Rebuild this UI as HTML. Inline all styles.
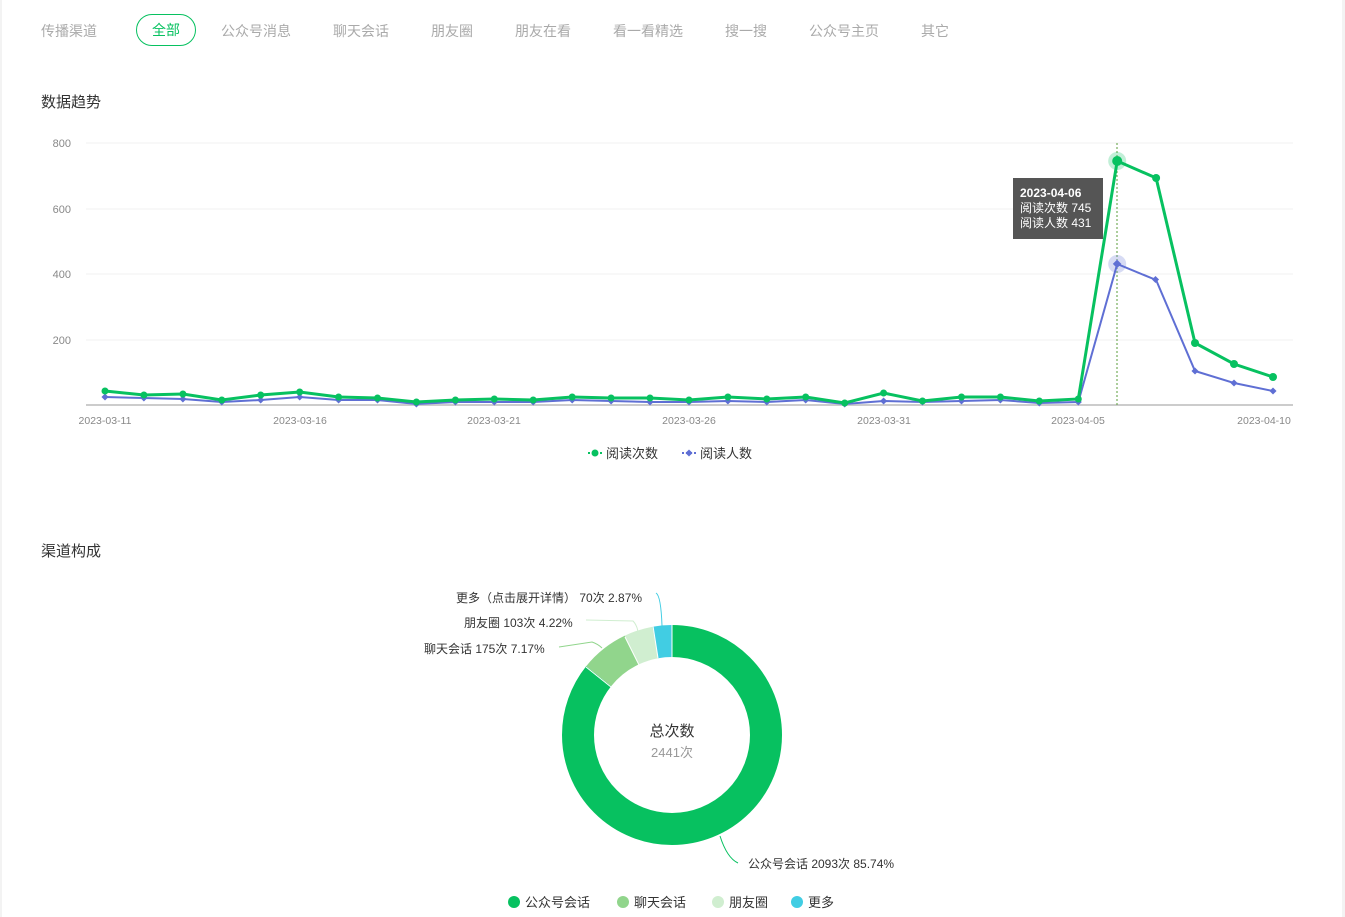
<!DOCTYPE html>
<html><head><meta charset="utf-8">
<style>
body{margin:0;width:1345px;height:917px;background:#fff;font-family:"Liberation Sans","Noto Sans CJK SC",sans-serif;position:relative;overflow:hidden}
.l{position:absolute;left:0;top:0;width:2px;height:917px;background:#f3f3f3}
.r{position:absolute;left:1342px;top:0;width:3px;height:917px;background:#f3f3f3}
.tab{position:absolute;top:21px;font-size:14px;color:#aaa;white-space:nowrap}
.act{position:absolute;left:136px;top:14px;width:58px;height:30px;border:1px solid #07c160;border-radius:16px;color:#07c160;font-size:14px;text-align:center;line-height:30px}
.h{position:absolute;left:41px;font-size:15px;color:#333}
svg{position:absolute;left:0;top:0}
</style></head><body>
<div class="l"></div><div class="r"></div>
<div class="tab" style="left:41px">传播渠道</div>
<div class="act">全部</div>
<div class="tab" style="left:221px">公众号消息</div>
<div class="tab" style="left:333px">聊天会话</div>
<div class="tab" style="left:431px">朋友圈</div>
<div class="tab" style="left:515px">朋友在看</div>
<div class="tab" style="left:613px">看一看精选</div>
<div class="tab" style="left:725px">搜一搜</div>
<div class="tab" style="left:809px">公众号主页</div>
<div class="tab" style="left:921px">其它</div>
<div class="h" style="top:91px">数据趋势</div>
<div class="h" style="top:540px">渠道构成</div>
<svg width="1345" height="917" font-family="Liberation Sans, Noto Sans CJK SC, sans-serif">
<defs><rect id="d" x="-2.5" y="-2.5" width="5" height="5" transform="rotate(45)" fill="#5f6fd4"/></defs>
<g stroke="#f0f0f0" stroke-width="1">
<line x1="86" y1="143" x2="1293" y2="143"/><line x1="86" y1="209" x2="1293" y2="209"/><line x1="86" y1="274" x2="1293" y2="274"/><line x1="86" y1="340" x2="1293" y2="340"/>
</g>
<line x1="86" y1="405" x2="1293" y2="405" stroke="#ccc" stroke-width="2"/>
<g font-size="11" fill="#888" text-anchor="end">
<text x="71" y="147">800</text><text x="71" y="213">600</text><text x="71" y="278">400</text><text x="71" y="344">200</text>
</g>
<g font-size="10.5" fill="#888" text-anchor="middle">
<text x="105" y="424">2023-03-11</text><text x="300" y="424">2023-03-16</text><text x="494" y="424">2023-03-21</text><text x="689" y="424">2023-03-26</text><text x="884" y="424">2023-03-31</text><text x="1078" y="424">2023-04-05</text><text x="1264" y="424">2023-04-10</text>
</g>
<line x1="1117" y1="143" x2="1117" y2="405" stroke="#5a9e3a" stroke-width="1" stroke-dasharray="2,2"/>
<polyline fill="none" stroke="#5f6fd4" stroke-width="2" points="105,397 143.9,398 182.9,399 221.8,402 260.7,400 299.7,397 338.6,400 377.5,400 416.4,404 455.4,402 494.3,402 533.2,402 572.2,400 611.1,401 650,402 689,402 727.9,401 766.8,402 805.7,400 844.7,404 883.6,401 922.5,402 961.5,401 1000.4,400 1039.3,403 1078.3,402 1117.2,264 1156.1,280 1195,371 1234,383 1273,391"/>
<g>
<use href="#d" x="105" y="397"/><use href="#d" x="143.9" y="398"/><use href="#d" x="182.9" y="399"/><use href="#d" x="221.8" y="402"/><use href="#d" x="260.7" y="400"/><use href="#d" x="299.7" y="397"/><use href="#d" x="338.6" y="400"/><use href="#d" x="377.5" y="400"/><use href="#d" x="416.4" y="404"/><use href="#d" x="455.4" y="402"/><use href="#d" x="494.3" y="402"/><use href="#d" x="533.2" y="402"/><use href="#d" x="572.2" y="400"/><use href="#d" x="611.1" y="401"/><use href="#d" x="650" y="402"/><use href="#d" x="689" y="402"/><use href="#d" x="727.9" y="401"/><use href="#d" x="766.8" y="402"/><use href="#d" x="805.7" y="400"/><use href="#d" x="844.7" y="404"/><use href="#d" x="883.6" y="401"/><use href="#d" x="922.5" y="402"/><use href="#d" x="961.5" y="401"/><use href="#d" x="1000.4" y="400"/><use href="#d" x="1039.3" y="403"/><use href="#d" x="1078.3" y="402"/>
</g>
<polyline fill="none" stroke="#07c160" stroke-width="3" points="105,391 143.9,395 182.9,394 221.8,400 260.7,395 299.7,392 338.6,397 377.5,398 416.4,402 455.4,400 494.3,399 533.2,400 572.2,397 611.1,398 650,398 689,400 727.9,397 766.8,399 805.7,397 844.7,403 883.6,393 922.5,401 961.5,397 1000.4,397 1039.3,401 1078.3,399 1117.2,161 1156.1,178 1195,343 1234,364 1273,377"/>
<g fill="#07c160">
<circle cx="105" cy="391" r="3.5"/><circle cx="143.9" cy="395" r="3.5"/><circle cx="182.9" cy="394" r="3.5"/><circle cx="221.8" cy="400" r="3.5"/><circle cx="260.7" cy="395" r="3.5"/><circle cx="299.7" cy="392" r="3.5"/><circle cx="338.6" cy="397" r="3.5"/><circle cx="377.5" cy="398" r="3.5"/><circle cx="416.4" cy="402" r="3.5"/><circle cx="455.4" cy="400" r="3.5"/><circle cx="494.3" cy="399" r="3.5"/><circle cx="533.2" cy="400" r="3.5"/><circle cx="572.2" cy="397" r="3.5"/><circle cx="611.1" cy="398" r="3.5"/><circle cx="650" cy="398" r="3.5"/><circle cx="689" cy="400" r="3.5"/><circle cx="727.9" cy="397" r="3.5"/><circle cx="766.8" cy="399" r="3.5"/><circle cx="805.7" cy="397" r="3.5"/><circle cx="844.7" cy="403" r="3.5"/><circle cx="883.6" cy="393" r="3.5"/><circle cx="922.5" cy="401" r="3.5"/><circle cx="961.5" cy="397" r="3.5"/><circle cx="1000.4" cy="397" r="3.5"/><circle cx="1039.3" cy="401" r="3.5"/><circle cx="1078.3" cy="399" r="3.5"/><circle cx="1156.1" cy="178" r="4"/><circle cx="1195" cy="343" r="4"/><circle cx="1234" cy="364" r="4"/><circle cx="1273" cy="377" r="4"/>
</g>
<circle cx="1117.2" cy="161" r="9" fill="#07c160" opacity="0.25"/><circle cx="1117.2" cy="161" r="5" fill="#07c160"/>
<circle cx="1117.2" cy="264" r="9" fill="#5f6fd4" opacity="0.25"/>
<g fill="#5f6fd4">
<rect x="1114" y="261" width="6" height="6" transform="rotate(45 1117.2 264)"/>
<rect x="1153" y="277" width="5" height="5" transform="rotate(45 1155.5 279.5)"/><rect x="1192.5" y="368.5" width="5" height="5" transform="rotate(45 1195 371)"/><rect x="1231.5" y="380.5" width="5" height="5" transform="rotate(45 1234 383)"/><rect x="1270.5" y="388.5" width="5" height="5" transform="rotate(45 1273 391)"/>
</g>
<rect x="1013" y="178" width="90" height="61" fill="#555"/>
<text x="1020" y="197" font-size="12" font-weight="bold" fill="#fff">2023-04-06</text>
<text x="1020" y="212" font-size="12" fill="#fff">阅读次数 745</text>
<text x="1020" y="227" font-size="12" fill="#fff">阅读人数 431</text>
<line x1="588" y1="453" x2="602" y2="453" stroke="#07c160" stroke-width="2" stroke-dasharray="2,2"/><circle cx="595" cy="453" r="3.5" fill="#07c160"/>
<text x="606" y="458" font-size="13" fill="#333">阅读次数</text>
<line x1="682" y1="453" x2="696" y2="453" stroke="#5f6fd4" stroke-width="2" stroke-dasharray="2,2"/><rect x="686.5" y="450.5" width="5" height="5" fill="#5f6fd4" transform="rotate(45 689 453)"/>
<text x="700" y="458" font-size="13" fill="#333">阅读人数</text>
<g transform="rotate(-90 672 735)" fill="none" stroke-width="32">
<circle cx="672" cy="735" r="94" stroke="#07c160" stroke-dasharray="506.4 590.6"/>
<circle cx="672" cy="735" r="94" stroke="#91d58c" stroke-dasharray="42.35 590.6" stroke-dashoffset="-506.4"/>
<circle cx="672" cy="735" r="94" stroke="#d0eed0" stroke-dasharray="24.92 590.6" stroke-dashoffset="-548.75"/>
<circle cx="672" cy="735" r="94" stroke="#41cde3" stroke-dasharray="16.95 590.6" stroke-dashoffset="-573.67"/>
</g>
<g stroke="#fff" stroke-width="1">
<line x1="672" y1="625" x2="672" y2="657"/><line x1="586" y1="667" x2="611" y2="687"/><line x1="625" y1="637" x2="639" y2="665"/><line x1="653" y1="626" x2="658" y2="658"/>
</g>
<text x="672" y="736" font-size="15" fill="#333" text-anchor="middle">总次数</text>
<text x="672" y="757" font-size="13" fill="#999" text-anchor="middle">2441次</text>
<g fill="none" stroke-width="1">
<path d="M656 593 Q661 596 662 626" stroke="#41cde3"/>
<path d="M586 620 L633 621 Q637 625 638 632" stroke="#d0eed0"/>
<path d="M559 647 L592 642 Q598 644 602 648" stroke="#91d58c"/>
<path d="M720 836 Q727 858 738 863" stroke="#07c160"/>
</g>
<g font-size="12" fill="#333">
<text x="456" y="602">更多（点击展开详情） 70次 2.87%</text>
<text x="464" y="627">朋友圈 103次 4.22%</text>
<text x="424" y="653">聊天会话 175次 7.17%</text>
<text x="748" y="868">公众号会话 2093次 85.74%</text>
</g>
<circle cx="514" cy="902" r="6" fill="#07c160"/><text x="525" y="907" font-size="13" fill="#333">公众号会话</text>
<circle cx="623" cy="902" r="6" fill="#91d58c"/><text x="634" y="907" font-size="13" fill="#333">聊天会话</text>
<circle cx="718" cy="902" r="6" fill="#d0eed0"/><text x="729" y="907" font-size="13" fill="#333">朋友圈</text>
<circle cx="797" cy="902" r="6" fill="#41cde3"/><text x="808" y="907" font-size="13" fill="#333">更多</text>
</svg>
</body></html>
